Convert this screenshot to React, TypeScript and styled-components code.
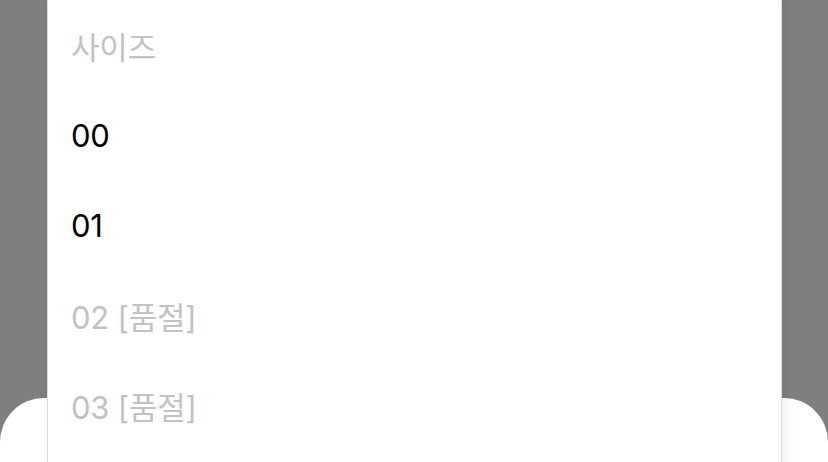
import * as React from 'react'
import styled, { createGlobalStyle } from 'styled-components'

const GlobalStyle = createGlobalStyle`
  html, body {
    margin: 0;
    padding: 0;
    background: #7f7f7f;
  }
  body {
    font-family: Inter, "Noto Sans CJK KR", sans-serif;
  }
`

const Stage = styled.div`
  position: relative;
  width: 828px;
  height: 462px;
  overflow: hidden;
  background: #7f7f7f;
  display: flex;
  flex-direction: column;
`

const Sheet = styled.div`
  margin-top: auto;
  height: 64px;
  background: #ffffff;
  border-radius: 44px 44px 0 0;
`

const Picker = styled.ul`
  position: absolute;
  top: -1px;
  left: 47px;
  width: 733px;
  bottom: -40px;
  margin: 0;
  padding: 0;
  list-style: none;
  background: #ffffff;
  border: 1px solid #dcdcdc;
  box-shadow: 2px 0 10px rgba(0, 0, 0, 0.08);
`

const Option = styled.li<{ $muted?: boolean }>`
  height: 90px;
  display: flex;
  align-items: center;
  padding-left: 23px;
  font-size: 31px;
  letter-spacing: -0.2px;
  color: ${p => (p.$muted ? '#c2c2c2' : '#000000')};
`

const options = [
  { label: '사이즈', muted: true },
  { label: '00', muted: false },
  { label: '01', muted: false },
  { label: '02 [품절]', muted: true },
  { label: '03 [품절]', muted: true },
]

export default function App() {
  return (
    <>
      <GlobalStyle />
      <Stage>
        <Sheet />
        <Picker>
          {options.map(o => (
            <Option key={o.label} $muted={o.muted}>
              {o.label}
            </Option>
          ))}
        </Picker>
      </Stage>
    </>
  )
}
